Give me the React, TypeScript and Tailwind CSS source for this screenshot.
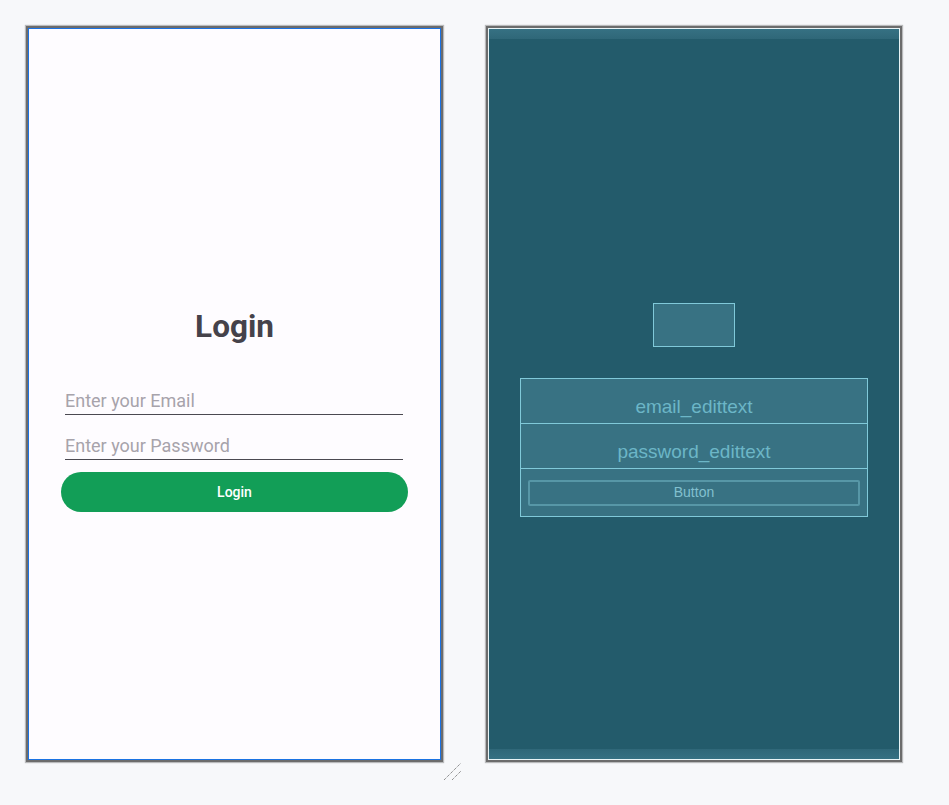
import React from 'react';

// Design surface: the rendered phone preview
function DesignPreview() {
  return (
    <div className="w-[417px] h-[736px] border-2 border-[#6c6c6c] shadow-[0_0_1px_1px_rgba(0,0,0,0.25)]">
      <div className="h-full border border-[#1b72e2] bg-[#fefcff] flex flex-col font-['Roboto',sans-serif]">
        <div className="mt-[278px] h-[40px] leading-[40px] text-center text-[31.5px] font-bold text-[#45424a]">
          Login
        </div>

        <div className="mt-[42px] ml-[36px] mr-[37px] h-[26px] leading-[24px] text-[18px] text-[#a7a3ab] border-b border-[#4b4951]">
          Enter your Email
        </div>
        <div className="mt-[19px] ml-[36px] mr-[37px] h-[26px] leading-[24px] text-[18px] text-[#a7a3ab] border-b border-[#4b4951]">
          Enter your Password
        </div>

        <div className="mt-[12px] ml-[32px] mr-[32px] h-[40px] rounded-full bg-[#129e57] flex items-center justify-center text-white text-[14px] font-medium">
          Login
        </div>
      </div>
    </div>
  );
}

// Blueprint surface: outlines of the same views
function BlueprintPreview() {
  return (
    <div className="w-[416px] h-[736px] border-2 border-[#6c6c6c] shadow-[0_0_1px_1px_rgba(0,0,0,0.25)]">
      <div className="h-full border border-[#e8f4f6] bg-[#235b6b] flex flex-col font-['Liberation_Sans',Arial,sans-serif]">
        <div className="h-[10px] bg-gradient-to-b from-[#367183] to-[#2f6778]" />

        <div className="flex-1 flex flex-col">
          <div className="mt-[264px] mx-auto w-[82px] h-[44px] border border-[#80c9d9] bg-[#387283]" />

          <div className="mt-[31px] mx-[31px] border border-[#80c9d9] bg-[#387283]">
            <div className="h-[45px] border-b border-[#80c9d9] pt-[17px] text-center text-[19px] leading-[22px] text-[#6cb6c7]">
              email_edittext
            </div>
            <div className="h-[45px] border-b border-[#80c9d9] pt-[17px] text-center text-[19px] leading-[22px] text-[#6cb6c7]">
              password_edittext
            </div>
            <div className="h-[47px] pt-[11px] px-[7px]">
              <div className="h-[26px] border-2 border-[#5797a7] rounded-[2px] text-center text-[14px] leading-[21px] text-[#82c0cf]">
                Button
              </div>
            </div>
          </div>
        </div>

        <div className="h-[10px] bg-gradient-to-b from-[#2f6778] to-[#367183]" />
      </div>
    </div>
  );
}

export default function App() {
  return (
    <div className="relative w-full min-h-screen bg-[#f7f8fa]">
      <div className="flex pt-[26px] pl-[26px] gap-[43px]">
        <DesignPreview />
        <BlueprintPreview />
      </div>

      {/* resize grip under the design surface */}
      <svg className="absolute left-[443px] top-[761px]" width="20" height="20" viewBox="0 0 20 20">
        <line x1="1" y1="19" x2="18" y2="2" stroke="#666" strokeWidth="1" strokeDasharray="1 1" />
        <line x1="9" y1="19" x2="18" y2="10" stroke="#666" strokeWidth="1" strokeDasharray="1 1" />
      </svg>
    </div>
  );
}
